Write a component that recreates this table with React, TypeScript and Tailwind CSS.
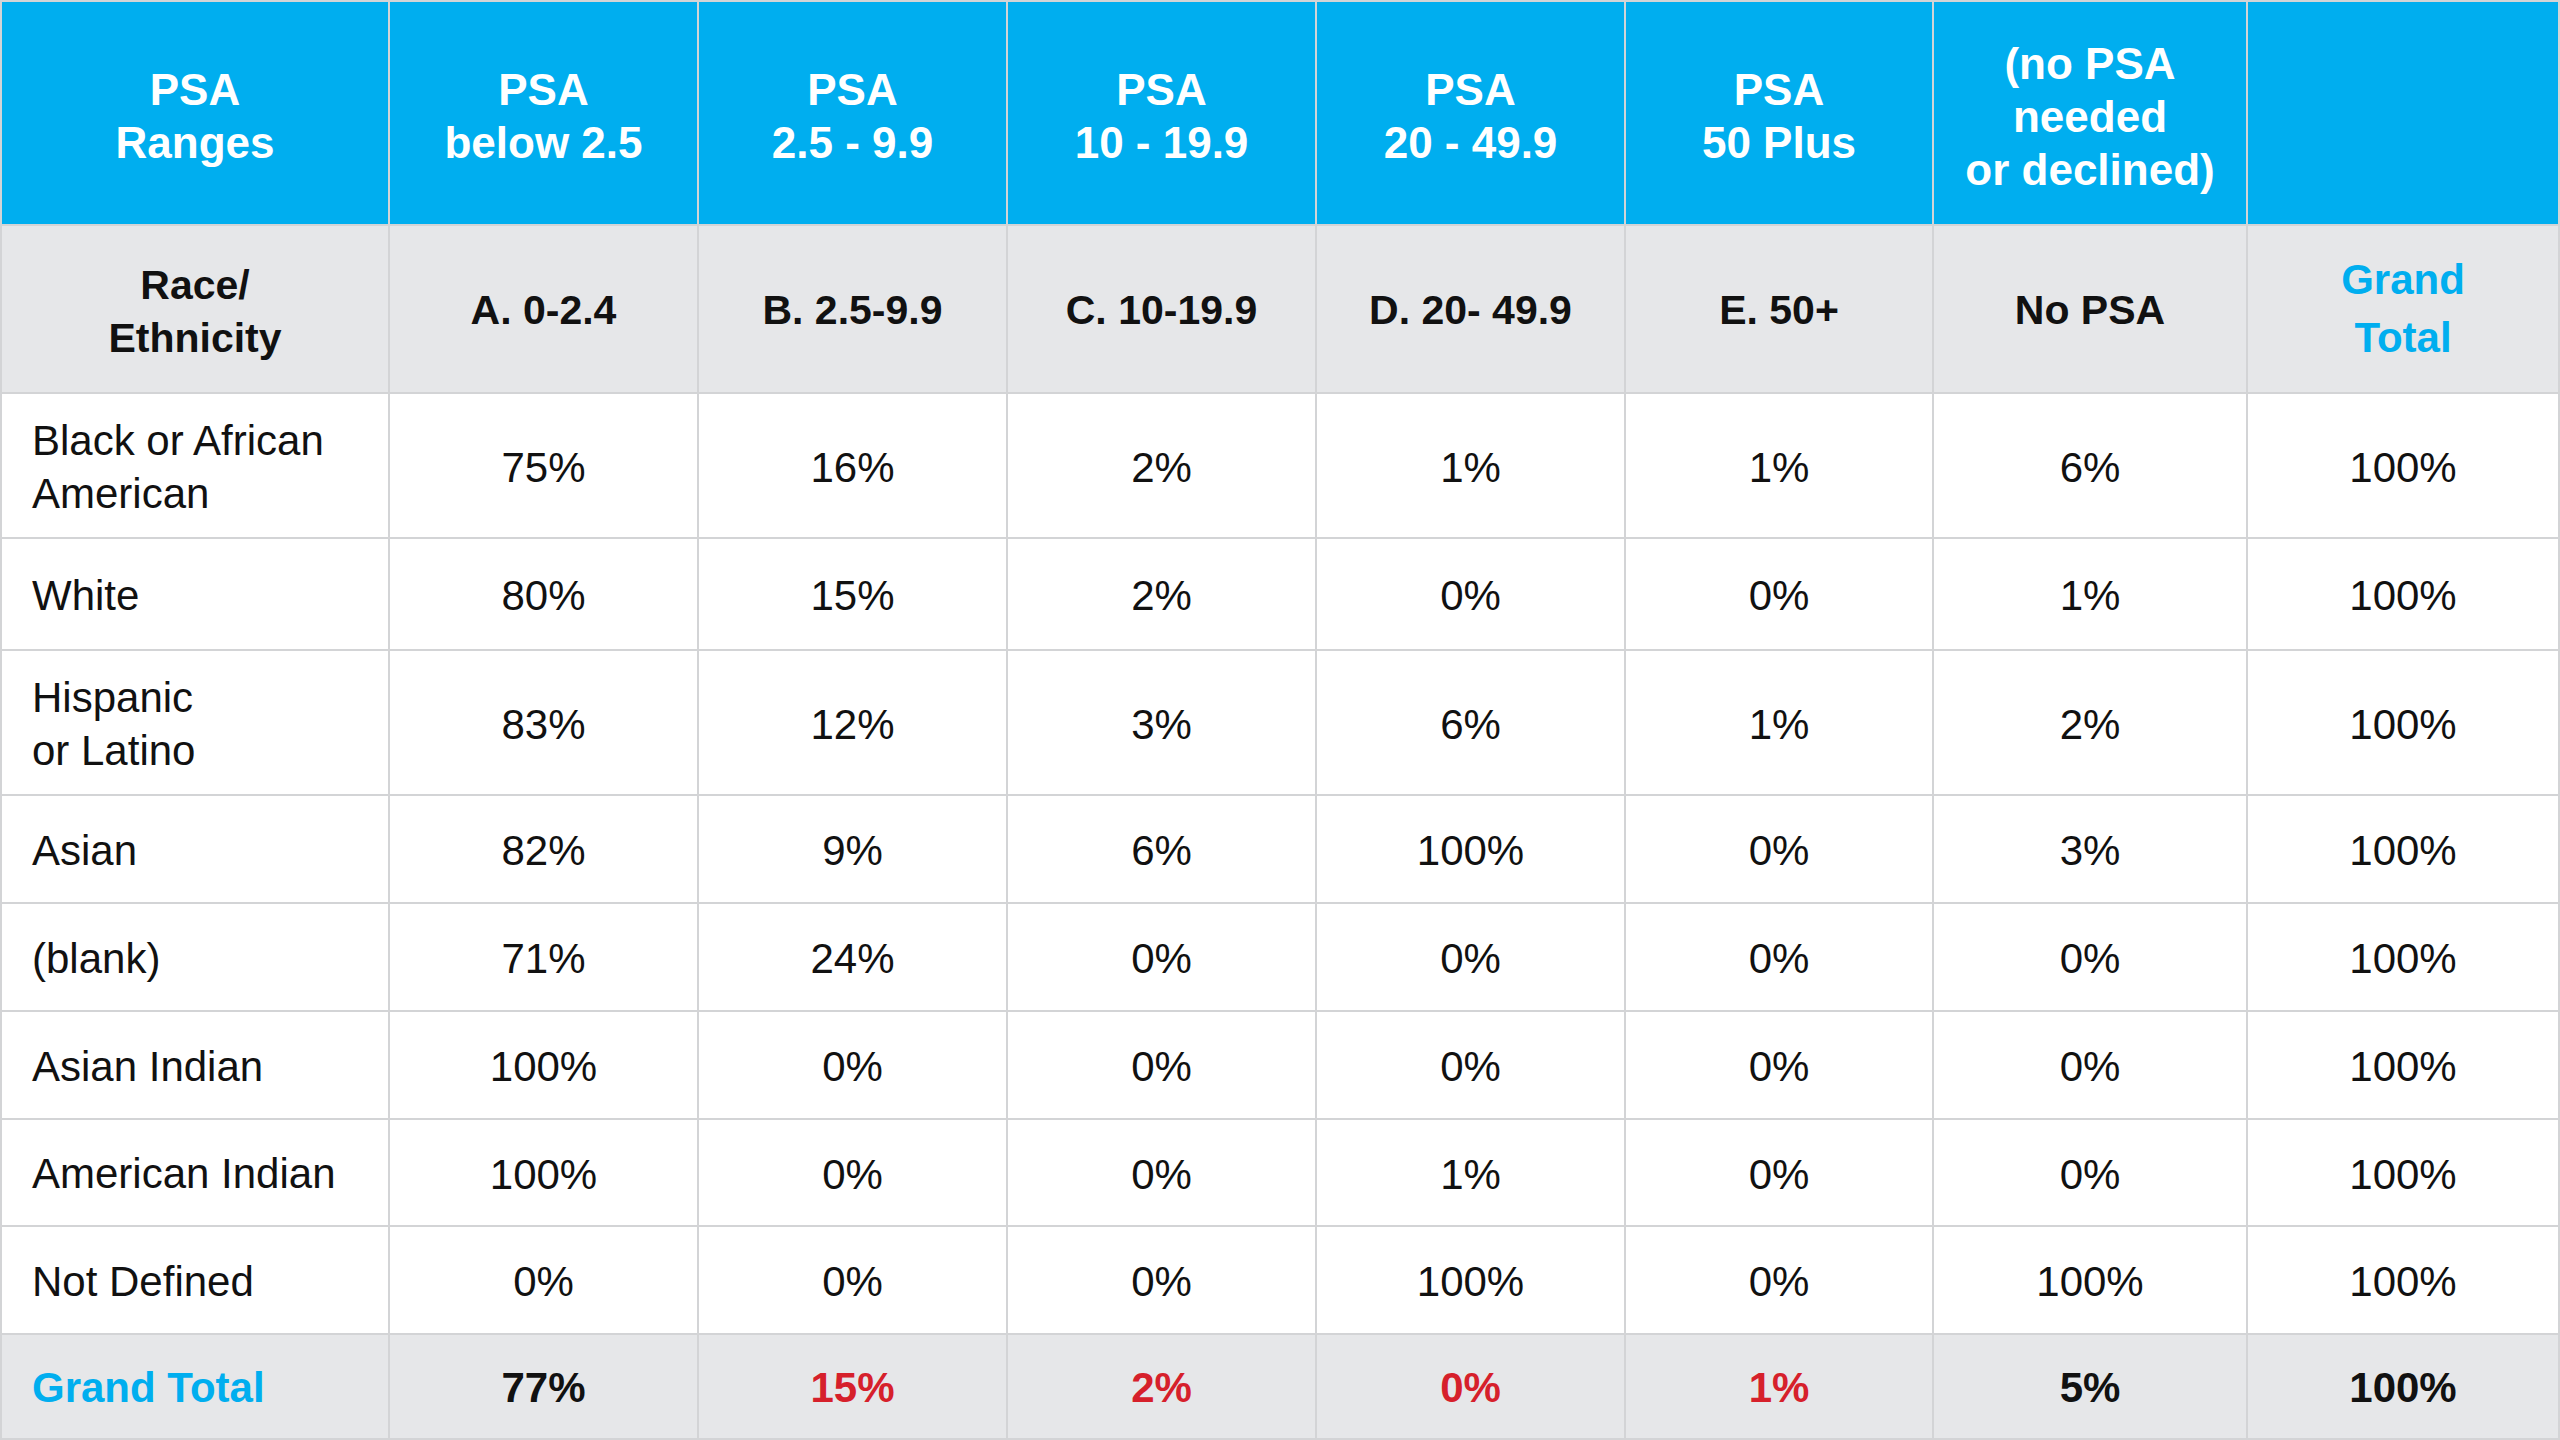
import React from 'react';

const ranges = [
  ['PSA', 'below 2.5'],
  ['PSA', '2.5 - 9.9'],
  ['PSA', '10 - 19.9'],
  ['PSA', '20 - 49.9'],
  ['PSA', '50 Plus'],
  ['(no PSA', 'needed', 'or declined)'],
];

const codes = ['A. 0-2.4', 'B. 2.5-9.9', 'C. 10-19.9', 'D. 20- 49.9', 'E. 50+', 'No PSA'];

const rows: { label: string[]; values: string[] }[] = [
  { label: ['Black or African', 'American'], values: ['75%', '16%', '2%', '1%', '1%', '6%', '100%'] },
  { label: ['White'], values: ['80%', '15%', '2%', '0%', '0%', '1%', '100%'] },
  { label: ['Hispanic', 'or Latino'], values: ['83%', '12%', '3%', '6%', '1%', '2%', '100%'] },
  { label: ['Asian'], values: ['82%', '9%', '6%', '100%', '0%', '3%', '100%'] },
  { label: ['(blank)'], values: ['71%', '24%', '0%', '0%', '0%', '0%', '100%'] },
  { label: ['Asian Indian'], values: ['100%', '0%', '0%', '0%', '0%', '0%', '100%'] },
  { label: ['American Indian'], values: ['100%', '0%', '0%', '1%', '0%', '0%', '100%'] },
  { label: ['Not Defined'], values: ['0%', '0%', '0%', '100%', '0%', '100%', '100%'] },
];

const totals = [
  { v: '77%', red: false },
  { v: '15%', red: true },
  { v: '2%', red: true },
  { v: '0%', red: true },
  { v: '1%', red: true },
  { v: '5%', red: false },
  { v: '100%', red: false },
];

const Lines = ({ lines }: { lines: string[] }) => (
  <>
    {lines.map((l, i) => (
      <span key={i} className="block whitespace-nowrap">
        {l}
      </span>
    ))}
  </>
);

export default function App() {
  return (
    <div
      className="w-[2560px] h-[1440px] bg-[#d3d4d6] p-[2px] grid gap-[2px] grid-cols-[386px_307px_307px_307px_307px_306px_312px_1fr] grid-rows-[222px_166px_143px_110px_143px_106px_106px_106px_105px_106px_1fr] text-[42px] leading-[53px] text-[#111]"
      style={{ fontFamily: '"Liberation Sans", Arial, sans-serif' }}
    >
      {/* top header */}
      <div className="bg-[#00aeef] flex items-center justify-center text-center text-white font-bold text-[44px] pt-[6px]">
        <div>
          <Lines lines={['PSA', 'Ranges']} />
        </div>
      </div>
      {ranges.map((r, i) => (
        <div key={i} className="bg-[#00aeef] flex items-center justify-center text-center text-white font-bold text-[44px] pt-[6px]">
          <div>
            <Lines lines={r} />
          </div>
        </div>
      ))}
      <div className="bg-[#00aeef]" />

      {/* sub header */}
      <div className="bg-[#e6e7e9] flex items-center justify-center text-center font-bold text-[41px] pt-[5px]">
        <div>
          <Lines lines={['Race/', 'Ethnicity']} />
        </div>
      </div>
      {codes.map((c) => (
        <div key={c} className="bg-[#e6e7e9] flex items-center justify-center font-bold text-[41px] whitespace-nowrap pt-[2px]">
          {c}
        </div>
      ))}
      <div className="bg-[#e6e7e9] flex items-center justify-center text-center font-bold text-[42px] leading-[58px] text-[#00aeef]">
        <div>
          <Lines lines={['Grand', 'Total']} />
        </div>
      </div>

      {/* data rows */}
      {rows.map((row) => (
        <React.Fragment key={row.label.join(' ')}>
          <div className="bg-white flex items-center pl-[30px] pt-[2px]">
            <div>
              <Lines lines={row.label} />
            </div>
          </div>
          {row.values.map((v, j) => (
            <div key={j} className="bg-white flex items-center justify-center pt-[3px]">
              {v}
            </div>
          ))}
        </React.Fragment>
      ))}

      {/* totals */}
      <div className="bg-[#e6e7e9] flex items-center pl-[30px] font-bold text-[#00aeef] pt-[2px]">Grand Total</div>
      {totals.map((t, j) => (
        <div
          key={j}
          className={
            t.red
              ? 'bg-[#e6e7e9] flex items-center justify-center font-bold text-[#d6202b] pt-[2px]'
              : 'bg-[#e6e7e9] flex items-center justify-center font-bold text-[#111] pt-[2px]'
          }
        >
          {t.v}
        </div>
      ))}
    </div>
  );
}
